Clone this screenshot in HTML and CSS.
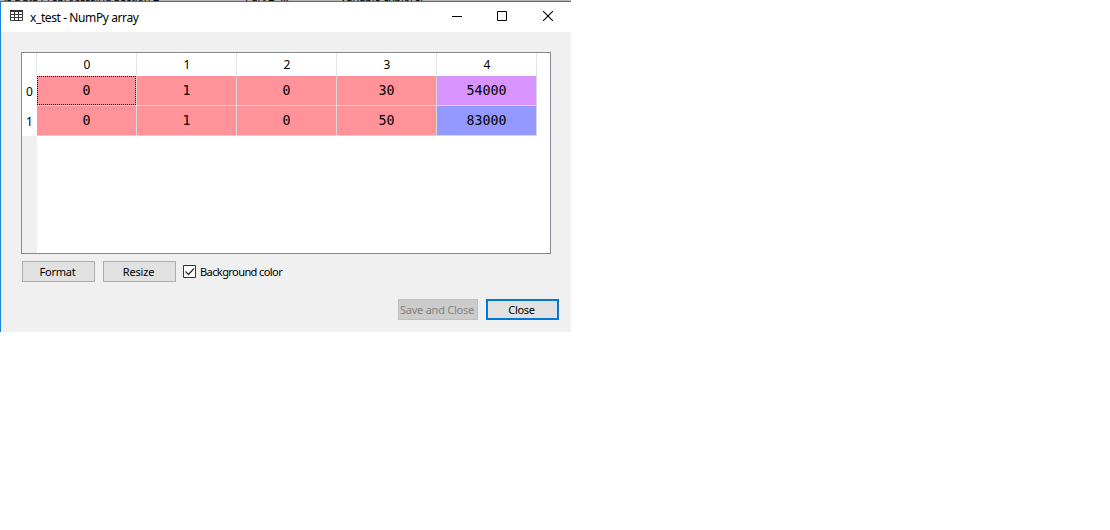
FILE: index.html
```
<!DOCTYPE html>
<html lang="en">
<head>
<meta charset="utf-8">
<title>x_test - NumPy array</title>
<link rel="stylesheet" href="styles.css">
</head>
<body>
<div class="backdrop"><span class="tab tab-file">ls Data Preprocessing Section 2</span><span class="tab tab-part">Part 2 -...</span><span class="tab">Variable explorer</span></div>
<main class="window">
  <header class="titlebar">
    <svg class="app-icon" width="13" height="11" viewBox="0 0 13 11"><path d="M0 1h13" stroke="#333" stroke-width="2"/><path d="M.5 1v9.5h12V1M0 4.5h13M0 7.5h13M4.5 1v9M8.5 1v9" fill="none" stroke="#3c3c3c"/></svg>
    <h1 class="title">x_test - NumPy array</h1>
    <div class="controls">
      <svg width="10" height="10" viewBox="0 0 10 10"><path d="M0 5.5h10" stroke="#000"/></svg>
      <svg width="10" height="10" viewBox="0 0 10 10"><path d="M.5.5h9v9h-9z" fill="none" stroke="#000"/></svg>
      <svg class="x" width="10" height="10" viewBox="0 0 10 10"><path d="M0 0l10 10M10 0L0 10" stroke="#000" stroke-width="1.1"/></svg>
    </div>
  </header>
  <section class="content">
    <div class="array">
      <div class="row head"><span class="index"></span><span>0</span><span>1</span><span>2</span><span>3</span><span>4</span></div>
      <div class="row"><span class="index">0</span><span class="cell current">0</span><span class="cell">1</span><span class="cell">0</span><span class="cell">30</span><span class="cell violet">54000</span></div>
      <div class="row"><span class="index">1</span><span class="cell">0</span><span class="cell">1</span><span class="cell">0</span><span class="cell">50</span><span class="cell blue">83000</span></div>
      <div class="gutter"></div>
    </div>
    <div class="options">
      <button class="button"><span class="t-format">Format</span></button>
      <button class="button"><span class="t-resize">Resize</span></button>
      <div class="check"><svg width="13" height="13" viewBox="0 0 13 13"><path d="M.5.5h12v12H.5z" fill="#fff" stroke="#333"/><path d="M2.5 6.5l3 3 5.5-6" fill="none" stroke="#333" stroke-width="1.3"/></svg><span class="t-check">Background color</span></div>
    </div>
    <div class="actions">
      <button class="button save" disabled><span class="t-save">Save and Close</span></button>
      <button class="button primary"><span class="t-close">Close</span></button>
    </div>
  </section>
</main>
</body>
</html>
```
FILE: styles.css
```
* { box-sizing: border-box; }
body { margin: 0; background: #fff; color: #000; font: 11px/16px "Noto Sans", sans-serif; }
.backdrop { display: flex; align-items: flex-end; width: 571px; height: 1px; overflow: hidden; background: #b5b5b5; font-size: 11px; line-height: 9px; letter-spacing: -.2px; white-space: nowrap; padding-left: 4px; }
.tab { flex: none; width: 95px; }
.tab-file { width: 241px; }
.window { width: 571px; height: 331px; border-top: 1px solid #1f7fcd; border-left: 1px solid #1883d7; background: #f0f0f0; }
.titlebar { display: flex; height: 30px; background: #fff; padding-left: 9px; }
.app-icon { margin-top: 8px; }
.title { margin: 7px 0 0 7px; font-size: 12px; line-height: 18px; font-weight: 400; letter-spacing: -.4px; white-space: nowrap; }
.controls { display: flex; gap: 35px; margin: 9px 18px 0 auto; }
.controls svg { display: block; }
.controls .x { margin-left: 1px; }
.content { padding: 20px 12px 0 20px; }
.array { display: flex; flex-direction: column; width: 530px; height: 202px; border: 1px solid #828790; background: #fff; }
.row { display: grid; grid-template-columns: 15px repeat(5, 100px); grid-template-rows: 30px; height: 30px; line-height: 30px; text-align: center; font-size: 12px; }
.row.head { grid-template-rows: 23px; height: 23px; line-height: 24px; }
.head span { border-right: 1px solid #e5e5e5; }
.head span + span { padding-left: 1px; }
.index { padding-top: 1px; }
.cell { background: #ff9399; border-right: 1px solid #d8d8d8; border-bottom: 1px solid #d8d8d8; font: 13.3px/29px "DejaVu Sans Mono", monospace; }
.violet { background-color: #d993ff; }
.blue { background-color: #9399ff; }
/* dotted focus frame inside the grid lines */
.current { background-image: repeating-linear-gradient(90deg, #000 0 1px, transparent 1px 2px), repeating-linear-gradient(90deg, #000 0 1px, transparent 1px 2px), repeating-linear-gradient(#000 0 1px, transparent 1px 2px), repeating-linear-gradient(#000 0 1px, transparent 1px 2px); background-size: 100% 1px, 100% 1px, 1px 100%, 1px 100%; background-position: top, bottom, left, right; background-repeat: no-repeat; }
.gutter { flex: 1; width: 15px; background: #f0f0f0; }
.options { display: flex; gap: 8px; margin: 7px 0 0 1px; }
.button { display: flex; justify-content: center; align-items: center; width: 73px; height: 21px; padding: 0 2px 0 0; border: 1px solid #adadad; background: #e1e1e1; color: #000; font: inherit; letter-spacing: -.2px; white-space: nowrap; }
.check { display: flex; align-items: center; gap: 4px; margin-left: -1px; white-space: nowrap; }
.actions { display: flex; justify-content: flex-end; gap: 8px; margin-top: 17px; }
.save { width: 80px; background: #ccc; border-color: #bfbfbf; color: #838383; }
.primary { border: 2px solid #0078d7; }
.t-check { letter-spacing: -.58px; }
.t-save { letter-spacing: -.25px; }
.t-close { letter-spacing: -.3px; }
```
